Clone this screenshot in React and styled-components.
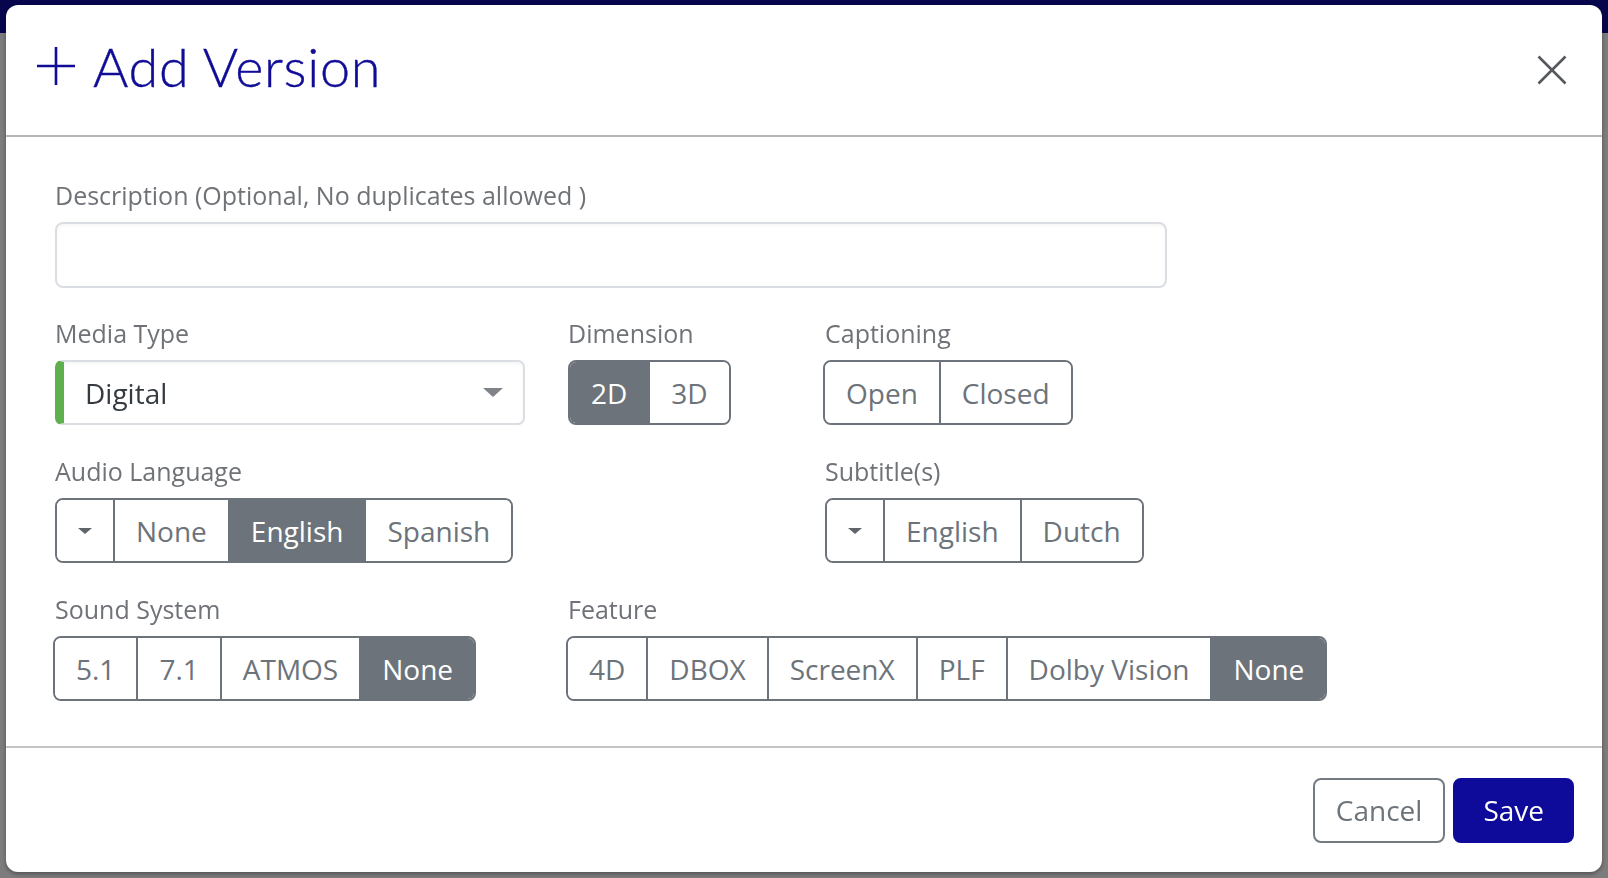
import React, { useState } from 'react'
import styled, { createGlobalStyle } from 'styled-components'

const GlobalStyle = createGlobalStyle`
  html, body {
    margin: 0;
    padding: 0;
    height: 100%;
    overflow: hidden;
  }
  body {
    font-family: 'Open Sans', 'Liberation Sans', sans-serif;
    background-color: #7d7d7d;
  }
`

const Page = styled.div`
  height: 100vh;
  display: flex;
  flex-direction: column;
`

const TopBar = styled.div`
  height: 33px;
  background-color: #07064c;
`

const Backdrop = styled.div`
  flex: 1;
  background-color: #7d7d7d;
`

const Modal = styled.div`
  position: fixed;
  top: 5px;
  left: 6px;
  width: 1596px;
  height: 867px;
  background-color: #fff;
  border-radius: 12px;
  display: flex;
  flex-direction: column;
  box-shadow: 0 2px 4px rgba(0, 0, 0, 0.35);
`

const Header = styled.header`
  height: 132px;
  flex-shrink: 0;
  display: flex;
  align-items: center;
  justify-content: space-between;
  padding: 0 35px 8px 30px;
  border-bottom: 2px solid #b5b5b5;
  box-sizing: border-box;
`

const Title = styled.h1`
  margin: 0;
  display: flex;
  align-items: center;
  gap: 17px;
  font-family: Lato, 'Open Sans', sans-serif;
  font-weight: 300;
  font-size: 54px;
  letter-spacing: 0.7px;
  color: #100c96;
  -webkit-text-stroke: 0.4px #100c96;
`

const CloseButton = styled.button`
  border: none;
  background: none;
  padding: 0;
  margin-top: 8px;
  cursor: pointer;
  display: flex;
`

const Body = styled.section`
  flex: 1;
  padding: 39px 49px 0 49px;
  border-bottom: 2px solid #c4c4c4;
`

const Field = styled.div`
  display: flex;
  flex-direction: column;
  align-items: flex-start;
  margin-bottom: ${p => (p.$last ? 0 : p.$gap || 27)}px;
`

const Label = styled.label`
  font-size: 25px;
  line-height: 38px;
  color: #6f7378;
  margin-bottom: 8px;
`

const TextInput = styled.input`
  width: 1112px;
  height: 66px;
  box-sizing: border-box;
  border: 2px solid #dadee2;
  border-radius: 8px;
  box-shadow: inset 0 2px 3px rgba(0, 0, 0, 0.04);
  font-size: 27px;
  padding: 0 16px;
  outline: none;
`

const Grid = styled.div`
  display: grid;
  grid-template-columns: 513px 257px 1fr;
`

const Select = styled.div`
  width: 470px;
  height: 65px;
  box-sizing: border-box;
  border: 2px solid #dadee2;
  border-left: 9px solid #5faf4f;
  border-radius: 7px;
  box-shadow: inset 0 2px 3px rgba(0, 0, 0, 0.04);
  display: flex;
  align-items: center;
  justify-content: space-between;
  padding: 0 20px 0 21px;
  font-size: 28px;
  color: #343a40;
`

const Caret = styled.span`
  width: 0;
  height: 0;
  border-left: ${p => p.$size}px solid transparent;
  border-right: ${p => p.$size}px solid transparent;
  border-top: ${p => Math.round(p.$size * 0.85)}px solid ${p => p.$color};
`

const Group = styled.div`
  display: flex;
  height: 65px;
  border: 2px solid #6c737a;
  border-radius: 8px;
  overflow: hidden;
  box-sizing: border-box;
  margin-left: ${p => p.$shift || 0}px;
`

const Segment = styled.button`
  border: none;
  border-left: 2px solid #6c737a;
  margin: 0;
  padding: 0 21px;
  font-family: 'Open Sans', 'Liberation Sans', sans-serif;
  font-size: 28px;
  line-height: 1;
  background-color: ${p => (p.$active ? '#6c737a' : '#fff')};
  color: ${p => (p.$active ? '#fff' : '#6c737a')};
  display: flex;
  align-items: center;
  justify-content: center;
  cursor: pointer;
  &:first-child {
    border-left: none;
  }
`

const CaretSegment = styled(Segment)`
  width: 56px;
  padding: 0;
`

const Footer = styled.footer`
  height: 124px;
  flex-shrink: 0;
  display: flex;
  align-items: center;
  justify-content: flex-end;
  gap: 8px;
  padding: 0 28px;
`

const FooterButton = styled.button`
  height: 65px;
  box-sizing: border-box;
  padding: 0 ${p => (p.$primary ? 28 : 21)}px;
  border-radius: 8px;
  border: 2px solid ${p => (p.$primary ? '#0e0a9a' : '#737a82')};
  background-color: ${p => (p.$primary ? '#0e0a9a' : '#fff')};
  color: ${p => (p.$primary ? '#fff' : '#6c737a')};
  font-family: 'Open Sans', 'Liberation Sans', sans-serif;
  font-size: 28px;
  cursor: pointer;
`

function ButtonGroup({ options, value, onChange, dropdown, shift }) {
  return (
    <Group $shift={shift}>
      {dropdown && (
        <CaretSegment>
          <Caret $size={7} $color="#5f656b" />
        </CaretSegment>
      )}
      {options.map(opt => (
        <Segment
          key={opt}
          $active={value === opt}
          onClick={() => onChange(opt)}>
          {opt}
        </Segment>
      ))}
    </Group>
  )
}

const PlusIcon = () => (
  <svg width="40" height="40" viewBox="0 0 40 40">
    <path d="M20 1v38M1 20h38" stroke="#100c96" strokeWidth="2.6" fill="none" />
  </svg>
)

const CloseIcon = () => (
  <svg width="30" height="30" viewBox="0 0 30 30">
    <path d="M1.5 1.5l27 27M28.5 1.5l-27 27" stroke="#55595e" strokeWidth="2.6" fill="none" />
  </svg>
)

export default function App() {
  const [dimension, setDimension] = useState('2D')
  const [captioning, setCaptioning] = useState('')
  const [audio, setAudio] = useState('English')
  const [subtitle, setSubtitle] = useState('')
  const [sound, setSound] = useState('None')
  const [feature, setFeature] = useState('None')

  return (
    <>
      <GlobalStyle />
      <Page>
        <TopBar />
        <Backdrop />
      </Page>
      <Modal>
        <Header>
          <Title>
            <PlusIcon />
            Add Version
          </Title>
          <CloseButton aria-label="Close">
            <CloseIcon />
          </CloseButton>
        </Header>
        <Body>
          <Field $gap={26}>
            <Label>Description (Optional, No duplicates allowed )</Label>
            <TextInput />
          </Field>
          <Grid>
            <Field>
              <Label>Media Type</Label>
              <Select>
                Digital
                <Caret $size={10} $color="#808488" />
              </Select>
            </Field>
            <Field>
              <Label>Dimension</Label>
              <ButtonGroup
                value={dimension}
                onChange={setDimension}
                options={['2D', '3D']}
              />
            </Field>
            <Field>
              <Label>Captioning</Label>
              <ButtonGroup
                shift={-2}
                value={captioning}
                onChange={setCaptioning}
                options={['Open', 'Closed']}
              />
            </Field>
            <Field>
              <Label>Audio Language</Label>
              <ButtonGroup
                dropdown
                value={audio}
                onChange={setAudio}
                options={['None', 'English', 'Spanish']}
              />
            </Field>
            <div />
            <Field>
              <Label>Subtitle(s)</Label>
              <ButtonGroup
                dropdown
                value={subtitle}
                onChange={setSubtitle}
                options={['English', 'Dutch']}
              />
            </Field>
            <Field $last>
              <Label>Sound System</Label>
              <ButtonGroup
                shift={-2}
                value={sound}
                onChange={setSound}
                options={['5.1', '7.1', 'ATMOS', 'None']}
              />
            </Field>
            <Field $last style={{ gridColumn: '2 / 4' }}>
              <Label>Feature</Label>
              <ButtonGroup
                shift={-2}
                value={feature}
                onChange={setFeature}
                options={['4D', 'DBOX', 'ScreenX', 'PLF', 'Dolby Vision', 'None']}
              />
            </Field>
          </Grid>
        </Body>
        <Footer>
          <FooterButton>Cancel</FooterButton>
          <FooterButton $primary>Save</FooterButton>
        </Footer>
      </Modal>
    </>
  )
}
